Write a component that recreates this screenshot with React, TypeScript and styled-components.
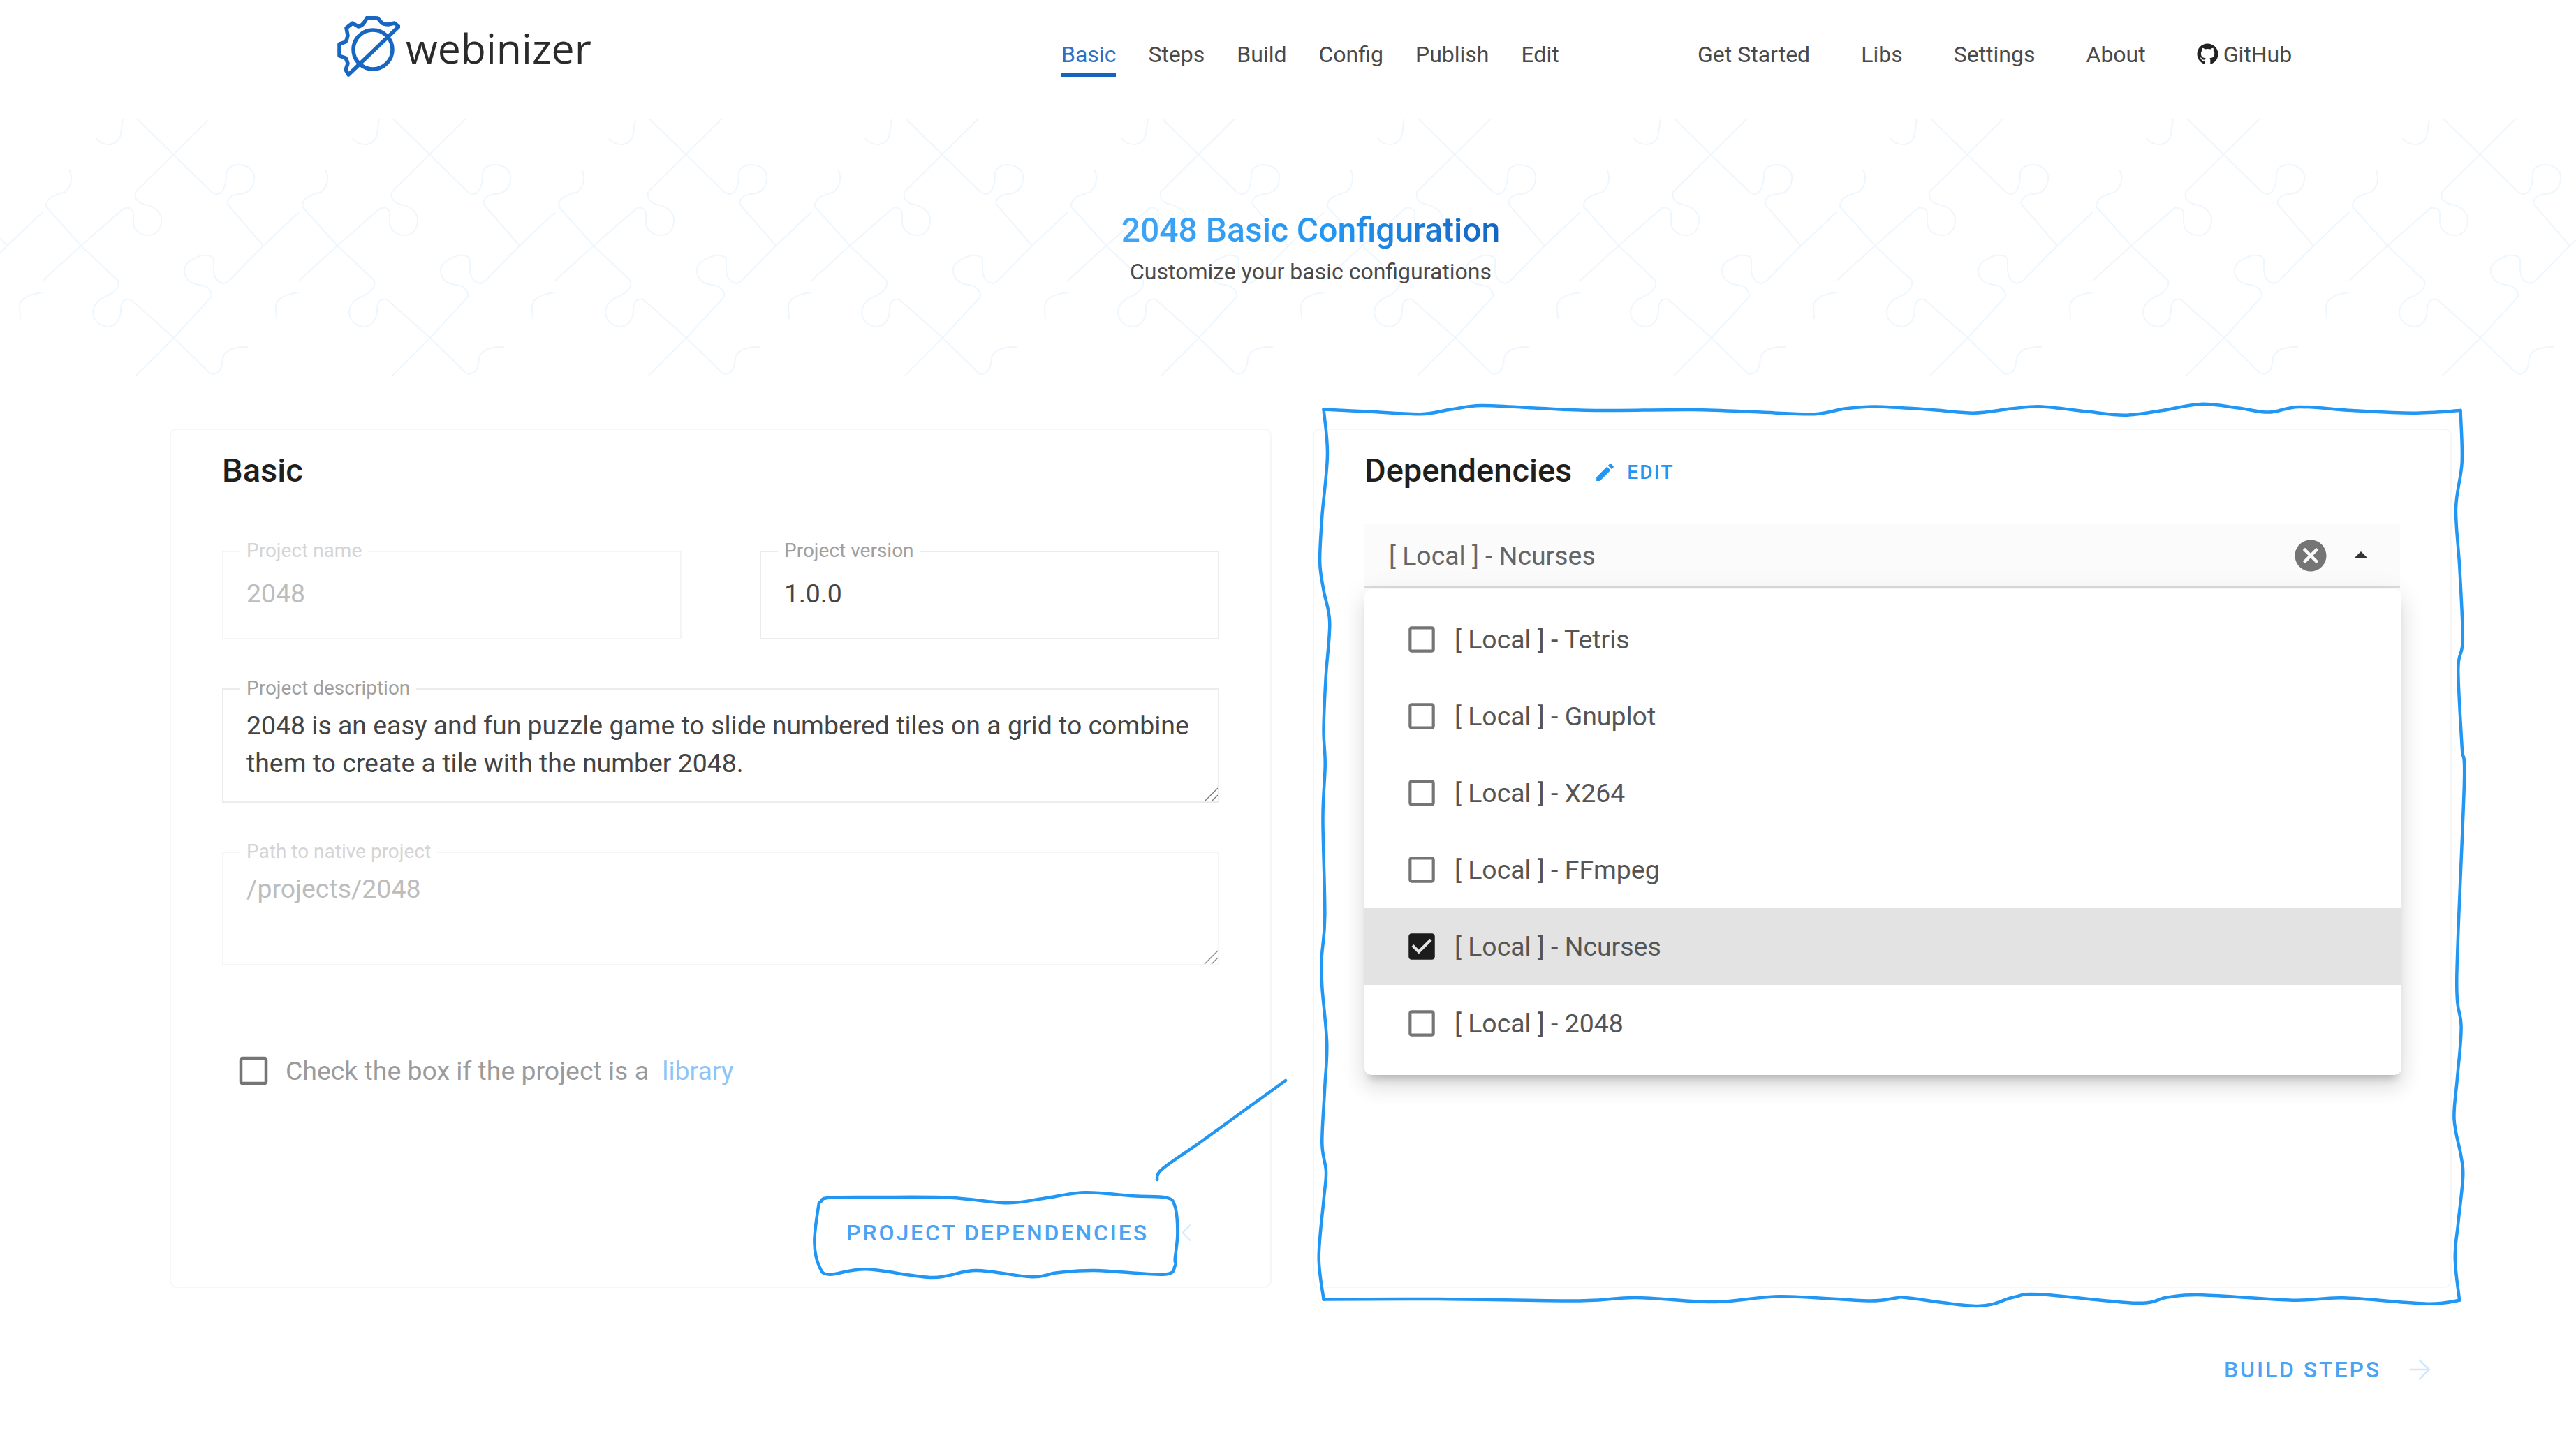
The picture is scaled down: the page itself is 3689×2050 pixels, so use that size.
import React from "react";
import styled, { createGlobalStyle } from "styled-components";
import { FaGithub } from "react-icons/fa";
import {
  MdArrowDropUp,
  MdCancel,
  MdCheckBox,
  MdCheckBoxOutlineBlank,
  MdEdit,
} from "react-icons/md";
import { ArrowRight, ChevronLeft } from "lucide-react";

const GlobalStyle = createGlobalStyle`
  html, body {
    margin: 0;
    padding: 0;
    background: #fff;
    font-family: Roboto, "Liberation Sans", sans-serif;
  }
  * { box-sizing: border-box; }
`;

const Page = styled.div`
  position: relative;
  width: 3689px;
  height: 2050px;
  overflow: hidden;
  background: #fff;
`;

const Header = styled.header`
  display: flex;
  align-items: flex-start;
  height: 170px;
`;

const Brand = styled.div`
  display: flex;
  align-items: flex-start;
  gap: 8px;
  width: 1520px;
  padding: 23px 0 0 483px;
`;

const BrandName = styled.span`
  margin-top: 5px;
  font-family: "Open Sans", sans-serif;
  font-size: 59px;
  line-height: 80px;
  color: #2b2b2b;
`;

const NavGroup = styled.nav<{ $gap: number; $width?: number }>`
  display: flex;
  gap: ${(p) => p.$gap}px;
  width: ${(p) => (p.$width ? `${p.$width}px` : "auto")};
  padding-top: 61px;
`;

const NavLink = styled.a<{ $active?: boolean }>`
  display: flex;
  align-items: center;
  gap: 7px;
  height: 49px;
  padding-bottom: 11px;
  font-size: 32px;
  line-height: 38px;
  color: ${(p) => (p.$active ? "#2f6fc4" : "#4a4a4a")};
  border-bottom: 5px solid ${(p) => (p.$active ? "#1565c0" : "transparent")};
`;

const Hero = styled.section`
  position: relative;
  height: 368px;
  padding: 132px 178px 0 243px;
  text-align: center;
`;

const PuzzleBack = styled.svg`
  position: absolute;
  top: 0;
  left: 0;
  width: 3689px;
  height: 368px;
`;

const HeroTitle = styled.h1`
  position: relative;
  width: fit-content;
  margin: 0 auto 11px;
  font-size: 48px;
  line-height: 56px;
  font-weight: 500;
  background: linear-gradient(90deg, #42a5f5 0%, #2196f3 55%, #1565c0 100%);
  -webkit-background-clip: text;
  background-clip: text;
  color: transparent;
`;

const HeroSub = styled.p`
  position: relative;
  margin: 0;
  font-size: 32px;
  line-height: 40px;
  color: #4a4a4a;
`;

const Main = styled.main`
  display: grid;
  grid-template-columns: 1578px 1631px;
  gap: 59px;
  padding: 76px 178px 0 243px;
`;

const Card = styled.div<{ $pad: number }>`
  padding: 30px ${(p) => p.$pad}px 55px;
  border: 2px solid #f6f6f6;
  border-radius: 10px;
  background: #fff;
`;

const CardTitle = styled.h2`
  margin: 0;
  font-size: 47px;
  line-height: 56px;
  font-weight: 500;
  color: #1f1f1f;
`;

const FieldGrid = styled.div`
  display: grid;
  grid-template-columns: 658px 658px;
  justify-content: space-between;
  gap: 70px 0;
  margin-top: 87px;
`;

const Field = styled.div<{ $wide?: boolean; $height: number; $disabled?: boolean }>`
  position: relative;
  grid-column: ${(p) => (p.$wide ? "1 / -1" : "auto")};
  height: ${(p) => p.$height}px;
  padding: ${(p) => (p.$wide ? "24px 33px 0" : "32px 33px 0")};
  border: 2px solid ${(p) => (p.$disabled ? "#f5f5f5" : "#ececec")};
  font-size: 37.4px;
  line-height: 54px;
  color: ${(p) => (p.$disabled ? "#bdbdbd" : "#444")};
`;

const FieldLabel = styled.label<{ $disabled?: boolean }>`
  position: absolute;
  top: -18px;
  left: 24px;
  padding: 0 9px;
  font-size: 28px;
  line-height: 32px;
  background: #fff;
  color: ${(p) => (p.$disabled ? "#d4d4d4" : "#a0a0a0")};
`;

const ResizeHandle = styled.svg`
  position: absolute;
  right: 0;
  bottom: 0;
  width: 20px;
  height: 20px;
`;

const CheckRow = styled.div`
  display: flex;
  align-items: center;
  gap: 19px;
  margin-top: 124px;
  padding-left: 18px;
  font-size: 37.4px;
  line-height: 50px;
  color: #9b9b9b;
`;

const LibraryLink = styled.a`
  margin-left: 10px;
  color: #8ec5f6;
`;

const BasicActions = styled.div`
  display: flex;
  justify-content: flex-end;
  align-items: center;
  gap: 32px;
  margin-top: 183px;
  padding-right: 25px;
`;

const ActionLink = styled.a`
  font-size: 32px;
  line-height: 44px;
  font-weight: 500;
  letter-spacing: 2.9px;
  color: #4aa3f3;
`;

const HeadingRow = styled.div`
  display: flex;
  align-items: center;
  gap: 34px;
`;

const EditLink = styled.a`
  display: flex;
  align-items: center;
  gap: 15px;
  margin-top: 4px;
  margin-left: -3px;
  font-size: 28px;
  font-weight: 500;
  letter-spacing: 2.2px;
  color: #2196f3;
`;

const SelectBox = styled.div`
  position: relative;
  margin-top: 49px;
`;

const SelectValue = styled.div`
  display: flex;
  align-items: center;
  gap: 21px;
  height: 91px;
  padding: 0 32px 0 35px;
  background: #fbfbfb;
  border-bottom: 2px solid #dcdcdc;
  font-size: 37.4px;
  color: #666;
`;

const SelectText = styled.span`
  flex: 1;
`;

const Menu = styled.ul`
  position: absolute;
  top: 93px;
  left: 0;
  z-index: 2;
  width: calc(100% + 2px);
  margin: 0;
  padding: 17px 0 19px;
  list-style: none;
  background: #fff;
  border-radius: 10px;
  box-shadow: 0 12px 12px -7px rgba(0, 0, 0, 0.2), 0 19px 28px 2px rgba(0, 0, 0, 0.08),
    0 7px 34px 6px rgba(0, 0, 0, 0.06);
`;

const MenuItem = styled.li<{ $selected?: boolean }>`
  display: flex;
  align-items: center;
  gap: 22px;
  height: 110px;
  padding-left: 57px;
  font-size: 37.4px;
  color: #555;
  background: ${(p) => (p.$selected ? "#e3e3e3" : "transparent")};
`;

const StepsRow = styled.div`
  display: flex;
  justify-content: flex-end;
  align-items: center;
  gap: 32px;
  margin-top: 94px;
  padding-right: 201px;
`;

const SketchLayer = styled.svg`
  position: absolute;
  top: 0;
  left: 0;
  z-index: 3;
  width: 3689px;
  height: 2050px;
  pointer-events: none;
`;

type Pt = number[];

// catmull-rom through hand read points, good enough for the marker strokes
function smooth(pts: Pt[], closed = false) {
  const at = (i: number) =>
    closed ? pts[(i + pts.length) % pts.length] : pts[Math.max(0, Math.min(pts.length - 1, i))];
  let d = `M${pts[0][0]} ${pts[0][1]}`;
  const end = closed ? pts.length : pts.length - 1;
  for (let i = 0; i < end; i++) {
    const [p0, p1, p2, p3] = [at(i - 1), at(i), at(i + 1), at(i + 2)];
    const c1 = [p1[0] + (p2[0] - p0[0]) / 6, p1[1] + (p2[1] - p0[1]) / 6];
    const c2 = [p2[0] - (p3[0] - p1[0]) / 6, p2[1] - (p3[1] - p1[1]) / 6];
    d += ` C${c1[0]} ${c1[1]} ${c2[0]} ${c2[1]} ${p2[0]} ${p2[1]}`;
  }
  return d;
}

const scaled = (pts: Pt[], ox: number, oy: number, sx: number, sy: number): Pt[] =>
  pts.map(([x, y]) => [x / sx + ox, y / sy + oy]);

const boxTop = scaled(
  [[42, 52], [100, 58], [170, 65], [210, 52], [250, 41], [320, 48], [400, 55], [530, 53], [620, 60], [690, 65], [730, 50], [770, 44], [840, 52], [900, 62], [950, 50], [990, 44], [1050, 58], [1100, 68], [1150, 55], [1200, 37], [1250, 48], [1290, 60], [1330, 45], [1400, 55], [1480, 62], [1543, 55]],
  1850, 560, 0.922, 1.96
);
const boxRight = [
  boxTop[boxTop.length - 1],
  ...scaled(
    [[1545, 200], [1537, 330], [1542, 500], [1546, 700], [1540, 780], [1545, 1000], [1548, 1100]],
    1850, 560, 0.922, 1.96
  ),
  ...scaled(
    [[1297, 0], [1307, 170], [1298, 350], [1291, 490], [1307, 620], [1311, 690], [1300, 850], [1293, 970], [1303, 1115]],
    2700, 1400, 1.585, 2.41
  ),
];
const boxBottom = [
  ...scaled(
    [[1303, 1115], [1230, 1127], [1040, 1107], [925, 1115], [720, 1097], [640, 1105], [570, 1125], [350, 1095], [290, 1105], [210, 1135], [50, 1107]],
    2700, 1400, 1.585, 2.41
  ),
  ...scaled(
    [[1490, 1493], [1420, 1503], [1200, 1488], [1040, 1507], [840, 1492], [700, 1503], [350, 1497], [62, 1498]],
    1860, 1250, 1.742, 2.45
  ),
];
const boxLeft = [
  ...scaled(
    [[62, 1498], [50, 1350], [62, 1150], [68, 1050], [58, 950], [65, 750], [70, 600], [58, 400], [57, 300], [65, 150]],
    1860, 1250, 1.742, 2.45
  ),
  ...scaled(
    [[41, 1200], [44, 1050], [42, 950], [45, 800], [50, 650], [42, 560], [37, 480], [40, 350], [47, 180], [42, 52]],
    1850, 560, 0.922, 1.96
  ),
];

const buttonBox = scaled(
  [[60, 150], [70, 125], [105, 107], [300, 105], [580, 107], [800, 130], [950, 110], [1110, 85], [1300, 100], [1430, 107], [1465, 145], [1475, 260], [1465, 370], [1465, 400], [1420, 437], [1150, 420], [1000, 430], [900, 448], [680, 420], [510, 450], [250, 415], [105, 437], [65, 405], [45, 300]],
  1150, 1680, 2.75, 3
);

const pointerLine = [[1657, 1690], [1664, 1675], [1718, 1637], [1780, 1592], [1841, 1548]];

const puzzlePaths = [
  "M98 170 L205 275 C215 283 226 275 226 250 C226 240 235 236 244 236 C258 236 268 246 266 258 C264 272 256 277 245 278 C232 279 226 285 228 293 L279 352",
  "M202 170 L96 275 C94 285 100 291 110 293 C125 296 134 305 133 318 C132 330 124 338 113 337 C100 336 93 328 93 318 L93 306 C93 300 87 296 80 298 L18 352 L-37 402",
  "M1 243 C5 250 7 265 -5 275 C-20 280 -32 282 -32 296 L18 352 L71 402 C73 412 65 420 53 425 C40 430 35 440 35 448 C36 462 48 468 58 468 C70 466 75 455 75 444 C75 432 80 427 89 429 L151 484 L204 536",
  "M330 304 L279 352 L230 402 C222 410 209 404 208 387 L208 371 C206 366 195 364 188 367 C174 372 166 378 166 387 C166 400 176 407 188 408 C200 409 206 418 205 425 L151 484 L97 538",
  "M330 419 C315 421 297 425 297 440 L298 457",
  "M205 536 C218 536 220 525 221 513 C223 502 238 496 257 497",
  "M78 170 L75 191 C74 202 65 207 58 207 C50 207 43 203 40 198",
];

const tileOffsets = Array.from({ length: 12 }, (_, i) => -269 + i * 367);

const leftNav = ["Steps", "Build", "Config", "Publish", "Edit"];
const rightNav = ["Get Started", "Libs", "Settings", "About"];
const deps = ["Tetris", "Gnuplot", "X264", "FFmpeg", "Ncurses", "2048"];

function GearLogo() {
  return (
    <svg width="90" height="88" viewBox="0 0 90 88" fill="none" stroke="#1766c2" strokeWidth="5.5" strokeLinejoin="round" strokeLinecap="round">
      <path d="M88 15 L82 10 L73 12 Q67 12 64 10 L58 3 L43 2 L38 10 Q35 14 30 15 L22 10 L13 17 L15 28 Q14 33 12 37 L3 40 L3 57 L12 60 Q14 64 15 68 L12 77 L16 84 Z" />
      <circle cx="51" cy="48" r="28" />
    </svg>
  );
}

function Puzzle() {
  return (
    <PuzzleBack viewBox="0 0 3689 368" fill="none" stroke="#eef6fe" strokeWidth="2">
      {tileOffsets.map((x) => (
        <g key={x} transform={`translate(${x} -170)`}>
          {puzzlePaths.map((d) => (
            <path key={d} d={d} />
          ))}
        </g>
      ))}
    </PuzzleBack>
  );
}

function Resizer({ color }: { color: string }) {
  return (
    <ResizeHandle viewBox="0 0 20 20" stroke={color} strokeWidth="1.4">
      <path d="M1 20 L20 1 M11 20 L20 11" />
    </ResizeHandle>
  );
}

export default function App() {
  return (
    <Page>
      <GlobalStyle />
      <Header>
        <Brand>
          <GearLogo />
          <BrandName>webinizer</BrandName>
        </Brand>
        <NavGroup $gap={46} $width={911}>
          <NavLink $active>Basic</NavLink>
          {leftNav.map((item) => (
            <NavLink key={item}>{item}</NavLink>
          ))}
        </NavGroup>
        <NavGroup $gap={73}>
          {rightNav.map((item) => (
            <NavLink key={item}>{item}</NavLink>
          ))}
          <NavLink>
            <FaGithub size={31} color="#222" />
            GitHub
          </NavLink>
        </NavGroup>
      </Header>

      <Hero>
        <Puzzle />
        <HeroTitle>2048 Basic Configuration</HeroTitle>
        <HeroSub>Customize your basic configurations</HeroSub>
      </Hero>

      <Main>
        <Card $pad={73}>
          <CardTitle>Basic</CardTitle>
          <FieldGrid>
            <Field $height={127} $disabled>
              <FieldLabel $disabled>Project name</FieldLabel>
              2048
            </Field>
            <Field $height={127}>
              <FieldLabel>Project version</FieldLabel>
              1.0.0
            </Field>
            <Field $wide $height={164}>
              <FieldLabel>Project description</FieldLabel>
              2048 is an easy and fun puzzle game to slide numbered tiles on a grid to combine them to create a tile with the number 2048.
              <Resizer color="#777" />
            </Field>
            <Field $wide $height={163} $disabled>
              <FieldLabel $disabled>Path to native project</FieldLabel>
              /projects/2048
              <Resizer color="#888" />
            </Field>
          </FieldGrid>
          <CheckRow>
            <MdCheckBoxOutlineBlank size={54} color="#757575" />
            <span>
              Check the box if the project is a <LibraryLink>library</LibraryLink>
            </span>
          </CheckRow>
          <BasicActions>
            <ActionLink>PROJECT DEPENDENCIES</ActionLink>
            <ChevronLeft size={44} strokeWidth={1.3} color="#d9ecfd" />
          </BasicActions>
        </Card>

        <Card $pad={72}>
          <HeadingRow>
            <CardTitle>Dependencies</CardTitle>
            <EditLink>
              <MdEdit size={33} />
              EDIT
            </EditLink>
          </HeadingRow>
          <SelectBox>
            <SelectValue>
              <SelectText>[ Local ] - Ncurses</SelectText>
              <MdCancel size={54} color="#757575" />
              <MdArrowDropUp size={48} color="#333" />
            </SelectValue>
            <Menu>
              {deps.map((dep) => (
                <MenuItem key={dep} $selected={dep === "Ncurses"}>
                  {dep === "Ncurses" ? (
                    <MdCheckBox size={50} color="#1c1c1c" />
                  ) : (
                    <MdCheckBoxOutlineBlank size={50} color="#757575" />
                  )}
                  [ Local ] - {dep}
                </MenuItem>
              ))}
            </Menu>
          </SelectBox>
        </Card>
      </Main>

      <StepsRow>
        <ActionLink>BUILD STEPS</ActionLink>
        <ArrowRight size={46} strokeWidth={1.3} color="#cfe6fb" />
      </StepsRow>

      <SketchLayer viewBox="0 0 3689 2050" fill="none" stroke="#2196f3" strokeWidth="4.5" strokeLinecap="round" strokeLinejoin="round">
        <path d={smooth(boxTop)} />
        <path d={smooth(boxRight)} />
        <path d={smooth(boxBottom)} />
        <path d={smooth(boxLeft)} />
        <path d={smooth(buttonBox, true)} />
        <path d={smooth(pointerLine)} />
      </SketchLayer>
    </Page>
  );
}
